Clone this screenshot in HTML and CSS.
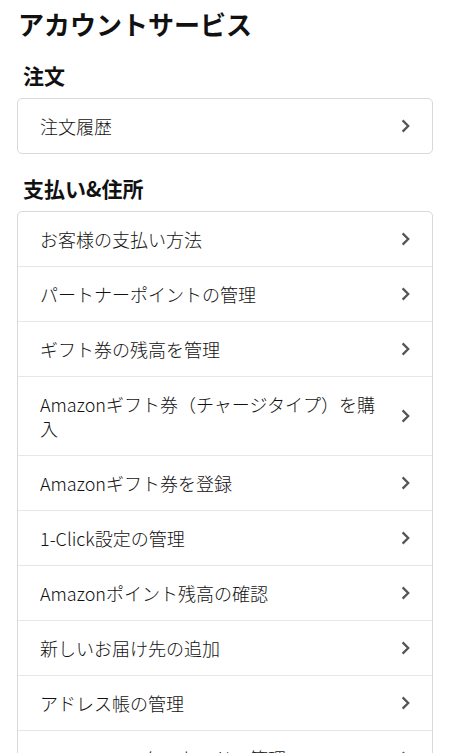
FILE: index.html
```html
<!DOCTYPE html>
<html lang="ja">
<head>
<meta charset="utf-8">
<title>アカウントサービス</title>
<link rel="stylesheet" href="styles.css">
</head>
<body>
<main class="page">
  <h1 class="title">アカウントサービス</h1>

  <h2 class="section-heading">注文</h2>
  <div class="card">
    <a class="row" href="#"><span class="row-text">注文履歴</span><svg class="chev" viewBox="0 0 9 14" width="9" height="14"><polyline points="1.6,1.4 7.2,7 1.6,12.6"/></svg></a>
  </div>

  <h2 class="section-heading">支払い&amp;住所</h2>
  <div class="card">
    <a class="row" href="#"><span class="row-text">お客様の支払い方法</span><svg class="chev" viewBox="0 0 9 14" width="9" height="14"><polyline points="1.6,1.4 7.2,7 1.6,12.6"/></svg></a>
    <a class="row" href="#"><span class="row-text">パートナーポイントの管理</span><svg class="chev" viewBox="0 0 9 14" width="9" height="14"><polyline points="1.6,1.4 7.2,7 1.6,12.6"/></svg></a>
    <a class="row" href="#"><span class="row-text">ギフト券の残高を管理</span><svg class="chev" viewBox="0 0 9 14" width="9" height="14"><polyline points="1.6,1.4 7.2,7 1.6,12.6"/></svg></a>
    <a class="row" href="#"><span class="row-text">Amazonギフト券（チャージタイプ）を購入</span><svg class="chev" viewBox="0 0 9 14" width="9" height="14"><polyline points="1.6,1.4 7.2,7 1.6,12.6"/></svg></a>
    <a class="row" href="#"><span class="row-text">Amazonギフト券を登録</span><svg class="chev" viewBox="0 0 9 14" width="9" height="14"><polyline points="1.6,1.4 7.2,7 1.6,12.6"/></svg></a>
    <a class="row" href="#"><span class="row-text">1-Click設定の管理</span><svg class="chev" viewBox="0 0 9 14" width="9" height="14"><polyline points="1.6,1.4 7.2,7 1.6,12.6"/></svg></a>
    <a class="row" href="#"><span class="row-text">Amazonポイント残高の確認</span><svg class="chev" viewBox="0 0 9 14" width="9" height="14"><polyline points="1.6,1.4 7.2,7 1.6,12.6"/></svg></a>
    <a class="row" href="#"><span class="row-text">新しいお届け先の追加</span><svg class="chev" viewBox="0 0 9 14" width="9" height="14"><polyline points="1.6,1.4 7.2,7 1.6,12.6"/></svg></a>
    <a class="row" href="#"><span class="row-text">アドレス帳の管理</span><svg class="chev" viewBox="0 0 9 14" width="9" height="14"><polyline points="1.6,1.4 7.2,7 1.6,12.6"/></svg></a>
    <a class="row" href="#"><span class="row-text">Amazonマスターカードの管理</span><svg class="chev" viewBox="0 0 9 14" width="9" height="14"><polyline points="1.6,1.4 7.2,7 1.6,12.6"/></svg></a>
  </div>
</main>
</body>
</html>
```

FILE: styles.css
```css
html, body {
  margin: 0;
  padding: 0;
  background: #ffffff;
}

body {
  font-family: "Noto Sans CJK JP", "Noto Sans", sans-serif;
  color: #0f1111;
}

.page {
  padding: 7px 17px 0 17px;
}

.title {
  margin: 0;
  padding-left: 1px;
  font-size: 26px;
  line-height: 34px;
  font-weight: 700;
  color: #111111;
}

.section-heading {
  margin: 20px 0 9px 0;
  padding-left: 6px;
  font-size: 21px;
  line-height: 28px;
  font-weight: 700;
  color: #111111;
}

.card {
  border: 1px solid #d9d9d9;
  border-radius: 5px;
  background: #ffffff;
  overflow: hidden;
}

.row {
  display: flex;
  align-items: center;
  padding: 15px 22px 15px 22px;
  border-top: 1px solid #e7e7e7;
  text-decoration: none;
  color: #111111;
  font-size: 18px;
  line-height: 24px;
  font-weight: 300;
}

.row:first-child {
  border-top: none;
}

.row-text {
  flex: 1;
  padding-right: 14px;
}

.chev {
  flex: none;
  fill: none;
  stroke: #555555;
  stroke-width: 2.3;
  stroke-linecap: butt;
  stroke-linejoin: miter;
}
```
